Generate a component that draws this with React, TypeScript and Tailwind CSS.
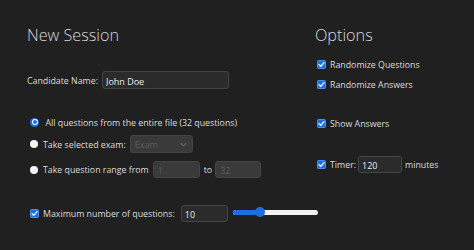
import React from "react";

const font = { fontFamily: '"Open Sans", "Noto Sans", sans-serif' };

function Check() {
  return (
    <div className="w-[9px] h-[9px] rounded-[1.5px] bg-[#1c6fe3] border border-[#4d8ff0] flex items-center justify-center shrink-0">
      <svg width="7" height="7" viewBox="0 0 10 10">
        <path d="M1.5 5.2 L4 7.6 L8.6 2.4" fill="none" stroke="#ffffff" strokeWidth="1.9" strokeLinecap="round" strokeLinejoin="round" />
      </svg>
    </div>
  );
}

function RadioOn() {
  return (
    <div className="w-[9px] h-[9px] rounded-full bg-[#1c6fe3] flex items-center justify-center shrink-0">
      <div className="w-[6px] h-[6px] rounded-full bg-white flex items-center justify-center">
        <div className="w-[4px] h-[4px] rounded-full bg-[#1c6fe3]" />
      </div>
    </div>
  );
}

function RadioOff() {
  return <div className="w-[8px] h-[8px] rounded-full bg-[#f4f4f4] shrink-0" />;
}

const inputCls =
  "h-full shrink-0 rounded-[3px] bg-[#2b2b2b] border border-[#444444] text-[#ececec] text-[9px] pl-[3px] pt-[2px] outline-none";
const disabledCls =
  "h-full shrink-0 rounded-[3px] bg-[#3a3a3a] border border-[#444444] text-[#5e5e5e] text-[9px] pl-[4px] pt-[2px] outline-none";

const txt = "whitespace-nowrap shrink-0 pt-[3px]";

export default function App() {
  return (
    <div
      className="w-[474px] h-[250px] bg-[#202020] flex text-[#dcdcdc] text-[8.8px] overflow-hidden"
      style={font}
    >
      {/* Left column */}
      <div className="w-[288px] shrink-0 pl-[27px] flex flex-col">
        <div className="mt-[25px] h-[20px] leading-[20px] text-[16.2px] font-light text-[#d8d8d8] whitespace-nowrap">
          New Session
        </div>

        <div className="mt-[26px] h-[18px] flex items-center">
          <span className={txt}>Candidate Name:</span>
          <input readOnly value="John Doe" className={`${inputCls} ml-[4px] w-[127px]`} style={font} />
        </div>

        <div className="mt-[24px] h-[18px] flex items-center">
          <div className="ml-[3px]">
            <RadioOn />
          </div>
          <span className={`${txt} ml-[6.5px]`}>All questions from the entire file (32 questions)</span>
        </div>

        <div className="mt-[4px] h-[18px] flex items-center">
          <div className="ml-[3px]">
            <RadioOff />
          </div>
          <span className={`${txt} ml-[5px]`}>Take selected exam:</span>
          <div className={`${disabledCls} ml-[4px] w-[63px] flex items-center justify-between pr-[5px]`}>
            <span>Exam</span>
            <svg width="7" height="5" viewBox="0 0 8 5" className="mb-[2px]">
              <path d="M1 1 L4 4 L7 1" fill="none" stroke="#6a6a6a" strokeWidth="1.3" />
            </svg>
          </div>
        </div>

        <div className="mt-[8px] h-[17px] flex items-center">
          <div className="ml-[3px]">
            <RadioOff />
          </div>
          <span className={`${txt} ml-[5px]`}>Take question range from</span>
          <input readOnly value="1" className={`${disabledCls} ml-[4px] w-[47px]`} style={font} />
          <span className={`${txt} ml-[4px]`}>to</span>
          <input readOnly value="32" className={`${disabledCls} ml-[3px] w-[46px]`} style={font} />
        </div>

        <div className="mt-[27px] h-[17px] flex items-center">
          <div className="ml-[3px]">
            <Check />
          </div>
          <span className={`${txt} ml-[4px]`}>Maximum number of questions:</span>
          <input readOnly value="10" className={`${inputCls} ml-[6px] w-[47px]`} style={font} />
          <div className="relative shrink-0 ml-[5px] w-[85px] h-[5px] mb-[3px] rounded-full bg-[#f2f2f2]">
            <div className="h-full w-[27px] rounded-full bg-[#1c6fe3]" />
            <div className="absolute left-[22px] top-[-2.5px] w-[10px] h-[10px] rounded-full bg-[#1c6fe3]" />
          </div>
        </div>
      </div>

      {/* Right column */}
      <div className="pl-[27px] flex flex-col">
        <div className="mt-[25px] h-[20px] leading-[20px] text-[16.2px] font-light text-[#d8d8d8]">
          Options
        </div>

        <div className="mt-[13px] h-[12px] flex items-center">
          <div className="ml-[2px]">
            <Check />
          </div>
          <span className={`${txt} ml-[4px]`}>Randomize Questions</span>
        </div>

        <div className="mt-[8px] h-[12px] flex items-center">
          <div className="ml-[2px]">
            <Check />
          </div>
          <span className={`${txt} ml-[4px]`}>Randomize Answers</span>
        </div>

        <div className="mt-[27px] h-[12px] flex items-center">
          <div className="ml-[2px]">
            <Check />
          </div>
          <span className={`${txt} ml-[4px]`}>Show Answers</span>
        </div>

        <div className="mt-[27px] h-[17px] flex items-center">
          <div className="ml-[2px]">
            <Check />
          </div>
          <span className={`${txt} ml-[4px]`}>Timer:</span>
          <input readOnly value="120" className={`${inputCls} ml-[2px] w-[44px]`} style={font} />
          <span className={`${txt} ml-[3px]`}>minutes</span>
        </div>
      </div>
    </div>
  );
}
